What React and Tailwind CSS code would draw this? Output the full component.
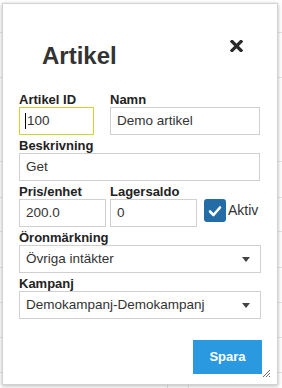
import React from "react";

const font = "font-['Liberation_Sans',Arial,sans-serif]";

function Label({ children }) {
  return (
    <div className="text-[13px] leading-[15px] font-bold text-[#222] whitespace-nowrap">
      {children}
    </div>
  );
}

function Field({ label, value, width, focused }) {
  return (
    <div className="flex flex-col" style={{ width }}>
      <Label>{label}</Label>
      <div
        className={
          "h-[28px] border bg-white flex items-center text-[13.5px] text-[#333] whitespace-nowrap overflow-hidden " +
          (focused ? "border-[#c9d930] pl-[5px]" : "border-[#d0d0d0] pl-[6px]")
        }
      >
        {focused && <span className="w-[1px] h-[16px] bg-black mr-[1px]" />}
        <span>{value}</span>
      </div>
    </div>
  );
}

function SelectField({ label, value }) {
  return (
    <div className="flex flex-col w-[242px]">
      <Label>{label}</Label>
      <div className="h-[28px] border border-[#d0d0d0] bg-white flex items-center pl-[6px] pr-[10px] text-[13.5px] text-[#333] whitespace-nowrap">
        <span className="flex-1">{value}</span>
        <svg width="8" height="5" viewBox="0 0 8 5">
          <path d="M0 0 L8 0 L4 5 Z" fill="#444" />
        </svg>
      </div>
    </div>
  );
}

export default function App() {
  return (
    <div className={"relative w-[282px] h-[388px] overflow-hidden bg-white " + font}>
      {/* page behind the dialog */}
      <div className="flex flex-col">
        <div className="h-[33px] border-b border-[#e4e4e4]" />
        <div className="h-[45px] border-b border-[#e4e4e4]" />
        <div className="h-[84px] border-b border-[#e4e4e4]" />
        <div className="h-[36px] border-b border-[#e4e4e4]" />
        <div className="h-[34px] border-b border-[#e4e4e4]" />
        <div className="h-[36px] border-b border-[#e4e4e4]" />
        <div className="h-[35px] border-b border-[#e4e4e4]" />
        <div className="h-[35px] border-b border-[#e4e4e4]" />
        <div className="h-[35px] border-b border-[#e4e4e4]" />
        <div className="h-[20px] flex">
          <div className="ml-[167px] w-[22px] border-x border-[#e4e4e4]" />
        </div>
      </div>

      {/* dialog */}
      <div className="absolute left-[2px] top-[3px] w-[276px] h-[382px] bg-white border border-[#d2d2d2] shadow-[0_1px_4px_rgba(0,0,0,0.28)] flex flex-col">
        <div className="flex items-start h-[88px] shrink-0">
          <h1 className="mt-[38px] ml-[39px] text-[24px] leading-[28px] font-bold text-[#333]">
            Artikel
          </h1>
          <div className="ml-auto mt-[36px] mr-[34px]">
            <svg width="13" height="12" viewBox="0 0 13 12">
              <path d="M2 1.5 L11 10.5 M11 1.5 L2 10.5" stroke="#2b2b2b" strokeWidth="3.2" strokeLinecap="square" />
            </svg>
          </div>
        </div>

        <div className="flex flex-col gap-[3px] pl-[16px]">
          <div className="flex gap-[16px]">
            <Field label="Artikel ID" value="100" width="75px" focused />
            <Field label="Namn" value="Demo artikel" width="150px" />
          </div>
          <Field label="Beskrivning" value="Get" width="241px" />
          <div className="flex items-start">
            <Field label="Pris/enhet" value="200.0" width="87px" />
            <div className="ml-[4px]">
              <Field label="Lagersaldo" value="0" width="87px" />
            </div>
            <div className="flex items-start ml-[7px] mt-[15px]">
              <div className="w-[22px] h-[23px] rounded-[3px] bg-[#246ca6] flex items-center justify-center">
                <svg width="14" height="12" viewBox="0 0 14 12">
                  <path d="M2 6.5 L5.5 10 L12 2.5" stroke="white" strokeWidth="2.6" fill="none" strokeLinecap="round" strokeLinejoin="round" />
                </svg>
              </div>
              <span className="ml-[2px] mt-[3px] text-[14px] leading-[16px] text-[#333]">Aktiv</span>
            </div>
          </div>
          <SelectField label="Öronmärkning" value="Övriga intäkter" />
          <SelectField label="Kampanj" value="Demokampanj-Demokampanj" />
        </div>

        <div className="mt-auto mb-[10px] mr-[15px] flex justify-end">
          <button className="w-[69px] h-[34px] bg-[#2b99df] text-white text-[13px] font-bold">
            Spara
          </button>
        </div>

        <div className="absolute right-[6px] bottom-[6px]">
          <svg width="9" height="9" viewBox="0 0 9 9">
            <path d="M8 1 L1 8 M8 4 L4 8 M8 7 L7 8" stroke="#666" strokeWidth="1" />
          </svg>
        </div>
      </div>
    </div>
  );
}
